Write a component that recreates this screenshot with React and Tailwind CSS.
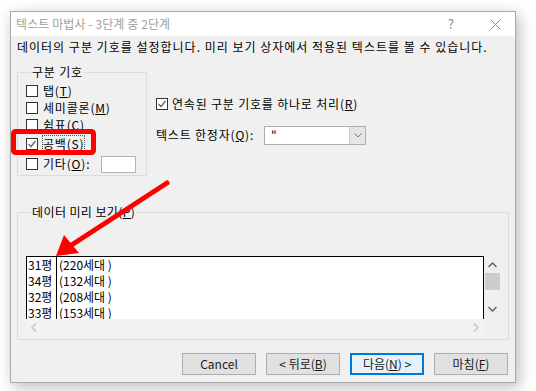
import React from "react";

const font = { fontFamily: '"Noto Sans CJK KR", "Noto Sans", sans-serif' };

function Check({ checked }) {
  return (
    <span className="w-[12px] h-[12px] border border-[#333] bg-white flex items-center justify-center shrink-0">
      {checked && (
        <svg width="10" height="10" viewBox="0 0 10 10">
          <path d="M1.5 5 L4 7.5 L8.5 2" fill="none" stroke="#5f5f5f" strokeWidth="1.2" />
        </svg>
      )}
    </span>
  );
}

function Label({ text, mn, tail = "" }) {
  return (
    <span>
      {text}(<u>{mn}</u>){tail}
    </span>
  );
}

function Btn({ children, primary }) {
  return (
    <button
      className={
        primary
          ? "w-[74px] h-[22px] bg-[#e5f1fb] border-2 border-[#0078d7] text-[12px] font-normal leading-none text-[#1a1a1a] flex items-center justify-center"
          : "w-[74px] h-[22px] bg-[#e1e1e1] border border-[#adadad] text-[12px] font-normal leading-none text-[#1a1a1a] flex items-center justify-center"
      }
    >
      {children}
    </button>
  );
}

const rows = [
  ["31평", "(220세대 )"],
  ["34평", "(132세대 )"],
  ["32평", "(208세대 )"],
  ["33평", "(153세대 )"],
];

export default function App() {
  return (
    <div className="relative w-[536px] h-[391px] bg-white overflow-hidden text-black" style={font}>
      <div className="absolute left-[10px] top-[11px] w-[506px] h-[372px] border border-[#a8a8a8] bg-[#f0f0f0] shadow-[3px_4px_14px_rgba(0,0,0,0.28)] flex flex-col">
        {/* title bar */}
        <div className="h-[24px] bg-white flex items-center pl-[5px] pr-[10px] text-[12px] text-[#a0a0a0] shrink-0">
          <span className="tracking-[0.1px]">텍스트 마법사 - 3단계 중 2단계</span>
          <span className="ml-auto mr-[36px] text-[13px] text-[#8a8a8a]">?</span>
          <svg width="11" height="11" viewBox="0 0 11 11" className="mr-[4px]">
            <path d="M0.5 0.5 L10.5 10.5 M10.5 0.5 L0.5 10.5" stroke="#8a8a8a" strokeWidth="1" />
          </svg>
        </div>

        {/* body */}
        <div className="flex-1 flex flex-col text-[12px] leading-[16px]">
          <p className="pt-[3px] pl-[6px] tracking-[1px] whitespace-nowrap">
            데이터의 구분 기호를 설정합니다. 미리 보기 상자에서 적용된 텍스트를 볼 수 있습니다.
          </p>

          <div className="flex mt-[9px] tracking-[0.8px]">
            <fieldset className="ml-[6px] w-[130px] h-[112px] border border-[#dcdcdc] pl-[8px]">
              <legend className="ml-[5px] px-[1px]">구분 기호</legend>
              <div className="flex flex-col pt-[3px]">
                <div className="flex items-center gap-[5px] h-[16px]">
                  <Check />
                  <Label text="탭" mn="T" />
                </div>
                <div className="flex items-center gap-[5px] h-[16px] mt-[1px]">
                  <Check />
                  <Label text="세미콜론" mn="M" />
                </div>
                <div className="flex items-center gap-[5px] h-[16px] mt-[1px]">
                  <Check />
                  <Label text="쉼표" mn="C" />
                </div>
                <div className="flex items-center gap-[5px] h-[16px] mt-[3px]">
                  <Check checked />
                  <span className="outline-1 outline-dotted outline-[#555]">
                    <Label text="공백" mn="S" />
                  </span>
                </div>
                <div className="flex items-center h-[18px] mt-[3px]">
                  <Check />
                  <span className="ml-[5px] w-[58px]">
                    <Label text="기타" mn="O" tail=":" />
                  </span>
                  <span className="w-[35px] h-[17px] bg-white border border-[#b4b4b4]" />
                </div>
              </div>
            </fieldset>

            <div className="ml-[9px] flex flex-col">
              <div className="mt-[32px] flex items-center gap-[4px] h-[16px] whitespace-nowrap">
                <Check checked />
                <Label text="연속된 구분 기호를 하나로 처리" mn="R" />
              </div>
              <div className="mt-[14px] flex items-center h-[18px]">
                <span className="w-[108px] whitespace-nowrap">
                  <Label text="텍스트 한정자" mn="Q" tail=":" />
                </span>
                <div className="w-[102px] h-[19px] bg-white border border-[#adadad] flex">
                  <span className="flex-1 pl-[6px] leading-[16px]">"</span>
                  <span className="w-[16px] bg-[#e6e6e6] border-l border-[#cfcfcf] flex items-center justify-center">
                    <svg width="8" height="5" viewBox="0 0 8 5">
                      <path d="M0.5 0.5 L4 4 L7.5 0.5" fill="none" stroke="#777" strokeWidth="1" />
                    </svg>
                  </span>
                </div>
              </div>
            </div>
          </div>

          <fieldset className="ml-[6px] mt-[28px] w-[492px] h-[136px] border border-[#dcdcdc] pl-[8px]">
            <legend className="ml-[5px] px-[1px] tracking-[0.4px]">
              데이터 미리 보기(<u>P</u>)
            </legend>
            <div className="mt-[36px] w-[474px]">
              <div className="flex">
                <div className="w-[458px] h-[63px] bg-white border-t border-l border-r border-black overflow-hidden">
                  {rows.map(([a, b]) => (
                    <div key={a} className="flex h-[16px] leading-[16px] text-[12px]">
                      <span className="w-[30px] pl-[1px] border-r border-black">{a}</span>
                      <span className="pl-[2px]">{b}</span>
                    </div>
                  ))}
                </div>
                <div className="w-[16px] h-[63px] flex flex-col items-center">
                  <svg width="9" height="6" viewBox="0 0 9 6" className="mt-[6px]">
                    <path d="M0.5 5 L4.5 1 L8.5 5" fill="none" stroke="#606060" strokeWidth="1.5" />
                  </svg>
                  <div className="mt-[5px] w-[15px] h-[17px] bg-[#cdcdcd]" />
                  <svg width="9" height="6" viewBox="0 0 9 6" className="mt-[16px]">
                    <path d="M0.5 1 L4.5 5 L8.5 1" fill="none" stroke="#606060" strokeWidth="1.5" />
                  </svg>
                </div>
              </div>
              <div className="w-[458px] h-[17px] flex items-center justify-between px-[5px] bg-[#f2f2f2]">
                <svg width="6" height="9" viewBox="0 0 6 9">
                  <path d="M5 0.5 L1 4.5 L5 8.5" fill="none" stroke="#c4c4c4" strokeWidth="1.5" />
                </svg>
                <svg width="6" height="9" viewBox="0 0 6 9">
                  <path d="M1 0.5 L5 4.5 L1 8.5" fill="none" stroke="#c4c4c4" strokeWidth="1.5" />
                </svg>
              </div>
            </div>
          </fieldset>

          <div className="mt-[13px] pr-[7px] flex justify-end gap-[10px]">
            <Btn>Cancel</Btn>
            <Btn>
              &lt; 뒤로(<u>B</u>)
            </Btn>
            <Btn primary>
              다음(<u>N</u>) &gt;
            </Btn>
            <Btn>
              마침(<u>F</u>)
            </Btn>
          </div>
        </div>
      </div>

      {/* annotations */}
      <svg className="absolute inset-0 pointer-events-none" width="536" height="391">
        <rect x="13.5" y="131.5" width="80" height="21" rx="2" fill="none" stroke="#ff0000" strokeWidth="5" />
        <line x1="167" y1="183" x2="70" y2="246" stroke="#ff0000" strokeWidth="5" strokeLinecap="round" />
        <polygon points="56,256 79,253 64,235" fill="#ff0000" />
      </svg>
    </div>
  );
}
